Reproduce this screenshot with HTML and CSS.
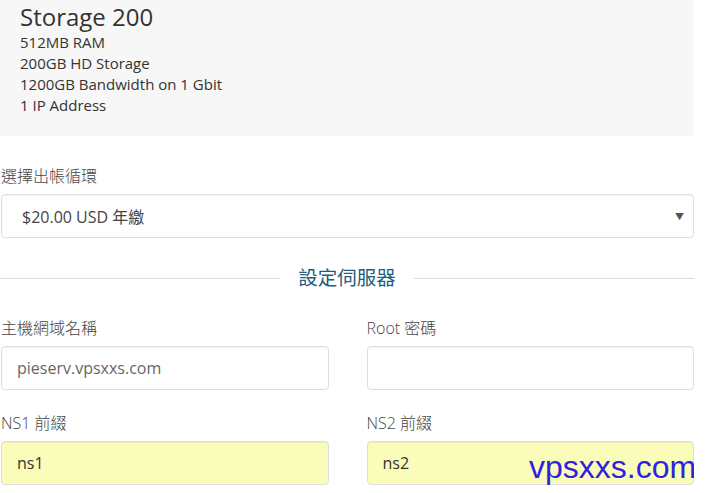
FILE: index.html
```html
<!DOCTYPE html>
<html lang="zh-Hant">
<head>
  <meta charset="UTF-8" />
  <title>Configure</title>
  <link rel="stylesheet" href="styles.css">
</head>
<body>
  <div class="product-info">
    <h2>Storage 200</h2>
    <div>512MB RAM</div>
    <div>200GB HD Storage</div>
    <div>1200GB Bandwidth on 1 Gbit</div>
    <div>1 IP Address</div>
  </div>

  <div class="field cycle">
    <label>選擇出帳循環</label>
    <div class="select-box">
      <span>$20.00 USD 年繳</span>
      <span class="caret">&#9660;</span>
    </div>
  </div>

  <div class="sub-heading"><span>設定伺服器</span></div>

  <div class="row">
    <div class="field">
      <label>主機網域名稱</label>
      <input type="text" class="placeholder" value="pieserv.vpsxxs.com" />
    </div>
    <div class="field">
      <label>Root 密碼</label>
      <input type="password" />
    </div>
  </div>

  <div class="row">
    <div class="field">
      <label>NS1 前綴</label>
      <input type="text" class="autofill" value="ns1" />
    </div>
    <div class="field">
      <label>NS2 前綴</label>
      <input type="text" class="autofill" value="ns2" />
    </div>
  </div>

  <div class="watermark">vpsxxs.com</div>
</body>
</html>
```

FILE: styles.css
```css
body { margin:0; font-family:'Open Sans','Noto Sans CJK TC',sans-serif; background:white; color:#333; width:694px; position:relative; height:493px; overflow:hidden; }
.product-info { background:#f7f7f7; padding:2px 20px 0 20px; height:134px; font-size:15px; line-height:21px; color:#333; }
.product-info h2 { margin:0; font-weight:400; font-size:24px; line-height:30px; }
.field label { display:block; font-size:16px; color:#444; font-weight:300; line-height:20px; margin-bottom:8px; }
.cycle { margin:30px 0 0 1px; }
.select-box { display:flex; justify-content:space-between; align-items:center; height:42px; border:1px solid #ddd; border-radius:4px; padding:0 9px 0 20px; font-size:16px; color:#444; box-shadow:inset 0 1px 1px rgba(0,0,0,0.04); }
.caret { font-size:9px; color:#555; }
.sub-heading { display:flex; align-items:center; gap:18px; margin:28px 0 0 0; color:#205d80; font-size:19.5px; line-height:24px; }
.sub-heading::before, .sub-heading::after { content:""; flex:1; border-top:1px solid #ddd; }
.row { display:grid; grid-template-columns:1fr 1fr; gap:38px; margin-left:1px; }
.sub-heading + .row { margin-top:28px; }
.row + .row { margin-top:23px; }
input { box-sizing:border-box; width:100%; height:44px; margin:0; border:1px solid #ddd; border-radius:4px; padding:0 15px; font-family:'Open Sans',sans-serif; font-size:16px; color:#333; box-shadow:inset 0 1px 1px rgba(0,0,0,0.05); }
input.placeholder { color:#666; }
input.autofill { background:#fafcb9; }
.watermark { position:absolute; left:529px; top:449px; font-family:'Liberation Sans',Arial,sans-serif; font-size:32px; color:#3021e0; }
```
